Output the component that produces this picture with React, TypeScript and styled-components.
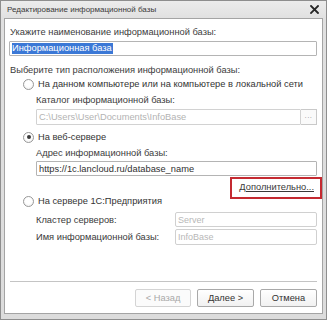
import React from "react";
import styled, { createGlobalStyle } from "styled-components";

const Global = createGlobalStyle`
  html, body { margin: 0; padding: 0; background: #ffffff; }
  body { font-family: "Liberation Sans", Arial, sans-serif; }
  * { box-sizing: border-box; }
`;

const FS = "9.3px";

const Window = styled.div`
  width: 327px;
  height: 320px;
  border: 1px solid #8e8e8e;
  background: linear-gradient(#ececec, #e0e0e0 18px, #dcdcdc);
  padding: 0 3px 5px 3px;
  display: flex;
  flex-direction: column;
`;

const TitleBar = styled.div`
  height: 17px;
  display: flex;
  align-items: center;
  justify-content: space-between;
  padding: 0 4px 0 3px;
`;

const TitleText = styled.span`
  font-size: 8px;
  color: #3a3a3a;
`;

const Content = styled.div`
  flex: 1;
  background: #ffffff;
  border: 1px solid #a4a4a4;
  padding: 6px 5px 6px 4px;
  display: flex;
  flex-direction: column;
`;

const Label = styled.div<{ $mt?: number; $indent?: number }>`
  height: 14px;
  line-height: 14px;
  font-size: ${FS};
  color: #3c3c3c;
  margin-top: ${(p) => p.$mt ?? 0}px;
  margin-left: ${(p) => p.$indent ?? 1}px;
  white-space: nowrap;
`;

const Input = styled.div<{ $mt?: number; $indent?: number; $h?: number; $disabled?: boolean }>`
  height: ${(p) => p.$h ?? 15}px;
  margin-top: ${(p) => p.$mt ?? 0}px;
  margin-left: ${(p) => p.$indent ?? 0}px;
  border: 1px solid ${(p) => (p.$disabled ? "#d2d2d2" : "#b4b4b4")};
  border-radius: 1px;
  background: #ffffff;
  font-size: ${FS};
  color: ${(p) => (p.$disabled ? "#b3b3b3" : "#303030")};
  display: flex;
  align-items: center;
  padding-left: 2px;
  white-space: nowrap;
  overflow: hidden;
`;

const Selected = styled.span`
  background: #3b78d6;
  color: #ffffff;
  line-height: 11px;
  padding: 0 1px 0 0;
`;

const InputRow = styled.div<{ $mt?: number; $indent?: number }>`
  display: flex;
  margin-top: ${(p) => p.$mt ?? 0}px;
  margin-left: ${(p) => p.$indent ?? 0}px;
`;

const Grow = styled.div`
  flex: 1;
  min-width: 0;
`;

const DotsButton = styled.div`
  width: 16px;
  height: 16px;
  border: 1px solid #c9c9c9;
  border-left: none;
  background: #fafafa;
  color: #9a9a9a;
  font-size: 8px;
  display: flex;
  align-items: flex-end;
  justify-content: center;
  padding-bottom: 4px;
  letter-spacing: 0.5px;
`;

const RadioRow = styled.div<{ $mt?: number }>`
  height: 14px;
  display: flex;
  align-items: center;
  margin-top: ${(p) => p.$mt ?? 0}px;
  margin-left: 14px;
  gap: 4px;
  font-size: ${FS};
  color: #333333;
  white-space: nowrap;
`;

const Radio = styled.span<{ $checked?: boolean }>`
  width: 11px;
  height: 11px;
  border-radius: 50%;
  border: 1px solid #989898;
  background: radial-gradient(circle at 50% 40%, #ffffff 40%, #ececec 100%);
  display: flex;
  align-items: center;
  justify-content: center;
  flex: none;
  &::after {
    content: "";
    width: 4px;
    height: 4px;
    border-radius: 50%;
    background: ${(p) => (p.$checked ? "#3a3a3a" : "transparent")};
  }
`;

const LinkRow = styled.div`
  height: 14px;
  margin-top: 4px;
  display: flex;
  justify-content: flex-end;
  padding-right: 3px;
`;

const LinkWrap = styled.span`
  position: relative;
  font-size: ${FS};
  line-height: 14px;
  color: #3a3a3a;
  text-decoration: underline;
  white-space: nowrap;
`;

const Highlight = styled.span`
  position: absolute;
  left: -9px;
  right: -8px;
  top: -3px;
  bottom: -5px;
  border: 2px solid #c42a31;
  pointer-events: none;
`;

const FieldRow = styled.div<{ $mt?: number; $h?: number }>`
  display: flex;
  align-items: center;
  height: ${(p) => p.$h ?? 15}px;
  margin-top: ${(p) => p.$mt ?? 0}px;
  margin-left: 27px;
`;

const FieldLabel = styled.span`
  width: 139px;
  font-size: ${FS};
  color: #3a3a3a;
  white-space: nowrap;
`;

const FieldInput = styled.div`
  flex: 1;
  height: 100%;
  border: 1px solid #d0d0d0;
  border-radius: 2px;
  font-size: 9px;
  color: #b8b8b8;
  display: flex;
  align-items: center;
  padding-left: 2px;
`;

const Spacer = styled.div`
  flex: 1;
`;

const Separator = styled.div`
  height: 2px;
  margin-left: 1px;
  border-top: 1px solid #c4c4c4;
  border-bottom: 1px solid #ffffff;
`;

const ButtonBar = styled.div`
  display: flex;
  justify-content: flex-end;
  gap: 6px;
  margin-top: 6px;
`;

const Button = styled.div<{ $disabled?: boolean; $w: number }>`
  width: ${(p) => p.$w}px;
  height: 18px;
  border: 1px solid ${(p) => (p.$disabled ? "#d4d4d4" : "#a9a9a9")};
  border-radius: 2px;
  background: ${(p) =>
    p.$disabled ? "#fbfbfb" : "linear-gradient(#ffffff, #f1f1f1)"};
  color: ${(p) => (p.$disabled ? "#a8a8a8" : "#333333")};
  font-size: ${FS};
  display: flex;
  align-items: center;
  justify-content: center;
  white-space: nowrap;
`;

const CloseIcon = () => (
  <svg width="9" height="9" viewBox="0 0 9 9">
    <path d="M1 1 L8 8 M8 1 L1 8" stroke="#262626" strokeWidth="1.8" strokeLinecap="square" />
  </svg>
);

export default function App() {
  return (
    <>
      <Global />
      <Window>
        <TitleBar>
          <TitleText>Редактирование информационной базы</TitleText>
          <CloseIcon />
        </TitleBar>
        <Content>
          <Label>Укажите наименование информационной базы:</Label>
          <Input $mt={2}>
            <Selected>Информационная база</Selected>
          </Input>
          <Label $mt={7}>Выберите тип расположения информационной базы:</Label>
          <RadioRow>
            <Radio />
            На данном компьютере или на компьютере в локальной сети
          </RadioRow>
          <Label $mt={2} $indent={27}>Каталог информационной базы:</Label>
          <InputRow $mt={2} $indent={27}>
            <Grow>
              <Input $h={16} $disabled>C:\Users\User\Documents\InfoBase</Input>
            </Grow>
            <DotsButton>...</DotsButton>
          </InputRow>
          <RadioRow $mt={5}>
            <Radio $checked />
            На веб-сервере
          </RadioRow>
          <Label $mt={2} $indent={27}>Адрес информационной базы:</Label>
          <Input $mt={1} $indent={27}>https://1c.lancloud.ru/database_name</Input>
          <LinkRow>
            <LinkWrap>
              Дополнительно...
              <Highlight />
            </LinkWrap>
          </LinkRow>
          <RadioRow>
            <Radio />
            На сервере 1С:Предприятия
          </RadioRow>
          <FieldRow $mt={4}>
            <FieldLabel>Кластер серверов:</FieldLabel>
            <FieldInput>Server</FieldInput>
          </FieldRow>
          <FieldRow $mt={2} $h={16}>
            <FieldLabel>Имя информационной базы:</FieldLabel>
            <FieldInput>InfoBase</FieldInput>
          </FieldRow>
          <Spacer />
          <Separator />
          <ButtonBar>
            <Button $w={56} $disabled>&lt; Назад</Button>
            <Button $w={57}>Далее &gt;</Button>
            <Button $w={57}>Отмена</Button>
          </ButtonBar>
        </Content>
      </Window>
    </>
  );
}
